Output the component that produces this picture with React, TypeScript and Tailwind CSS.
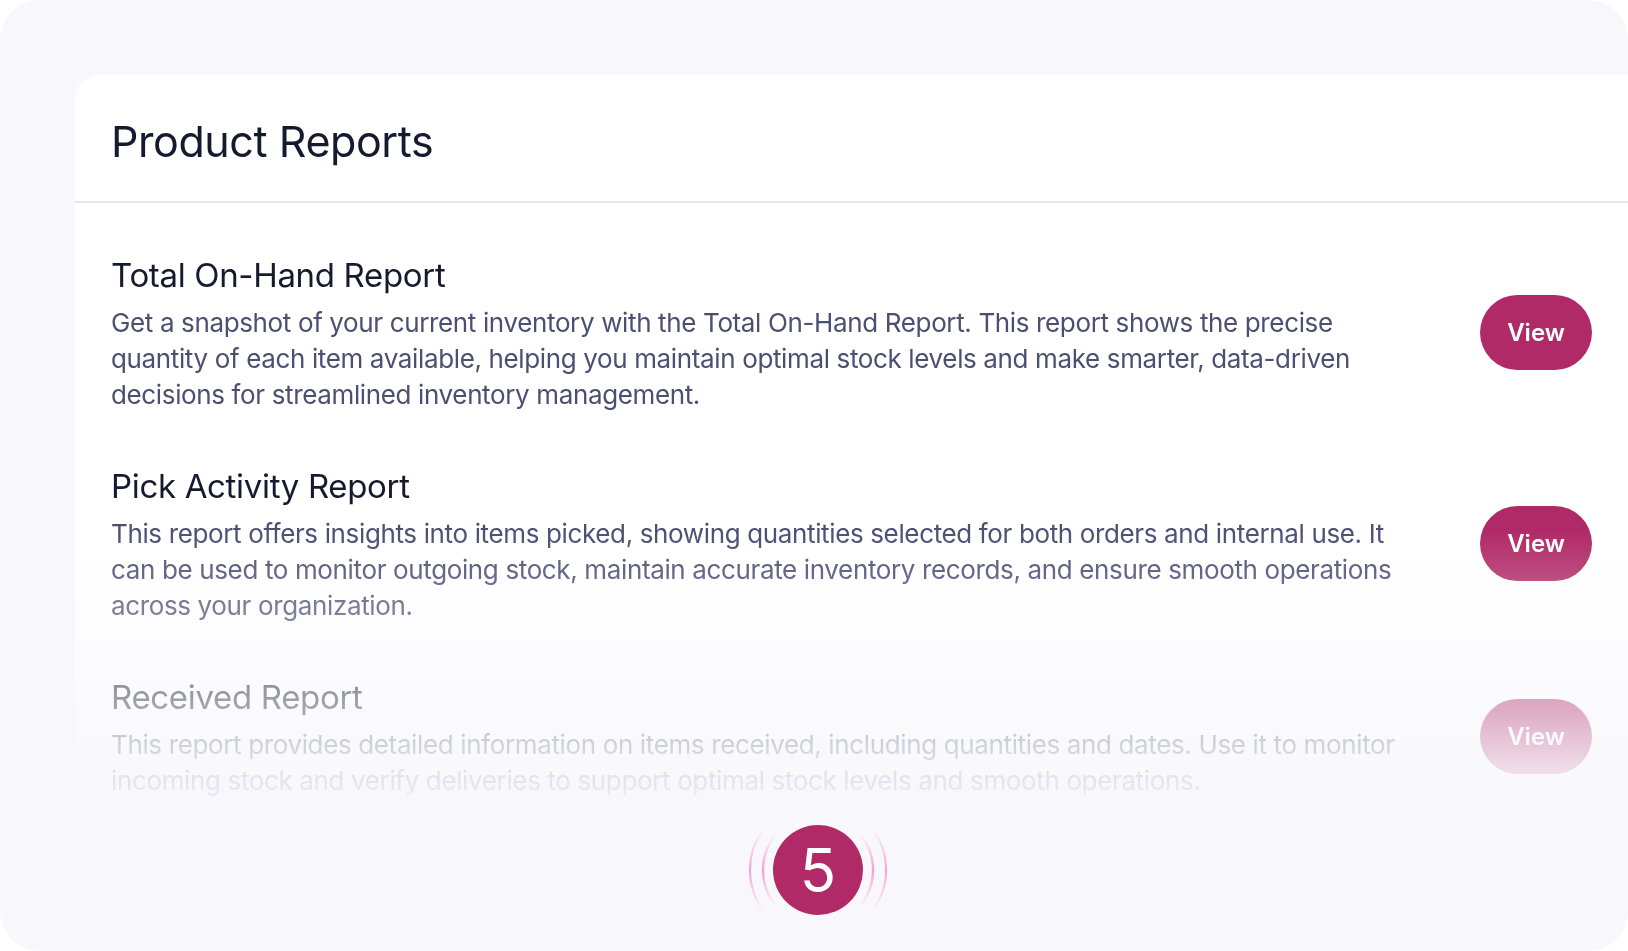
import React from 'react'

const reports = [
  {
    title: 'Total On-Hand Report',
    text: 'Get a snapshot of your current inventory with the Total On-Hand Report. This report shows the precise quantity of each item available, helping you maintain optimal stock levels and make smarter, data-driven decisions for streamlined inventory management.',
  },
  {
    title: 'Pick Activity Report',
    text: 'This report offers insights into items picked, showing quantities selected for both orders and internal use. It can be used to monitor outgoing stock, maintain accurate inventory records, and ensure smooth operations across your organization.',
  },
  {
    title: 'Received Report',
    text: 'This report provides detailed information on items received, including quantities and dates. Use it to monitor incoming stock and verify deliveries to support optimal stock levels and smooth operations.',
  },
]

function StepBadge({ n }: { n: number }) {
  return (
    <div className="absolute left-[738px] top-[820px] w-[160px] h-[100px] flex items-center justify-center">
      <svg className="absolute inset-0" width="160" height="100" viewBox="0 0 160 100" fill="none">
        <defs>
          <linearGradient id="arc" x1="0" y1="0" x2="0" y2="1">
            <stop offset="0" stopColor="#f9a8d4" stopOpacity="0" />
            <stop offset="0.5" stopColor="#f7a0d2" stopOpacity="1" />
            <stop offset="1" stopColor="#f9a8d4" stopOpacity="0" />
          </linearGradient>
        </defs>
        <path d="M39.1 13.2 A55 55 0 0 0 39.1 86.8" stroke="url(#arc)" strokeWidth="2.5" />
        <path d="M26.4 8.1 A68 68 0 0 0 26.4 91.9" stroke="url(#arc)" strokeWidth="2" />
        <path d="M120.9 13.2 A55 55 0 0 1 120.9 86.8" stroke="url(#arc)" strokeWidth="2.5" />
        <path d="M133.6 8.1 A68 68 0 0 1 133.6 91.9" stroke="url(#arc)" strokeWidth="2" />
      </svg>
      <div className="relative w-[90px] h-[90px] rounded-full bg-[#b02a67] flex items-center justify-center text-white text-[60px] leading-none font-normal">
        {n}
      </div>
    </div>
  )
}

export default function App() {
  return (
    <div className="relative w-full h-screen bg-white overflow-hidden font-['Inter',sans-serif]">
      <div className="w-full h-full rounded-[40px] bg-[#f8f8fc] pt-[75px] pl-[75px] flex">
        <div className="flex-1 flex flex-col bg-white rounded-tl-[24px] [mask-image:linear-gradient(to_bottom,#000_52%,rgba(0,0,0,0.42)_71%,rgba(0,0,0,0.14)_79%,transparent_87%)]">
          <div className="h-[128px] shrink-0 flex items-center pl-[36px] pt-[5px] border-b-2 border-[#e4e6ef]">
            <h1 className="text-[43px] leading-[50px] font-normal text-[#161a2e] tracking-[-0.01em]">
              Product Reports
            </h1>
          </div>
          <div className="flex flex-col gap-[53px] pt-[52px] pl-[36px] pr-[36px]">
            {reports.map((r) => (
              <div key={r.title} className="flex items-center gap-[75px]">
                <div className="flex-1 flex flex-col gap-[10px]">
                  <h2 className="text-[33px] leading-[40px] font-normal text-[#161a2e] tracking-[-0.01em]">
                    {r.title}
                  </h2>
                  <p className="text-[26px] leading-[36px] text-[#4b4f72] tracking-[-0.014em]">{r.text}</p>
                </div>
                <button className="w-[112px] h-[75px] shrink-0 -mt-[3px] rounded-full bg-[#b02a67] text-white text-[24px] font-semibold">
                  View
                </button>
              </div>
            ))}
          </div>
        </div>
      </div>
      <StepBadge n={5} />
    </div>
  )
}
